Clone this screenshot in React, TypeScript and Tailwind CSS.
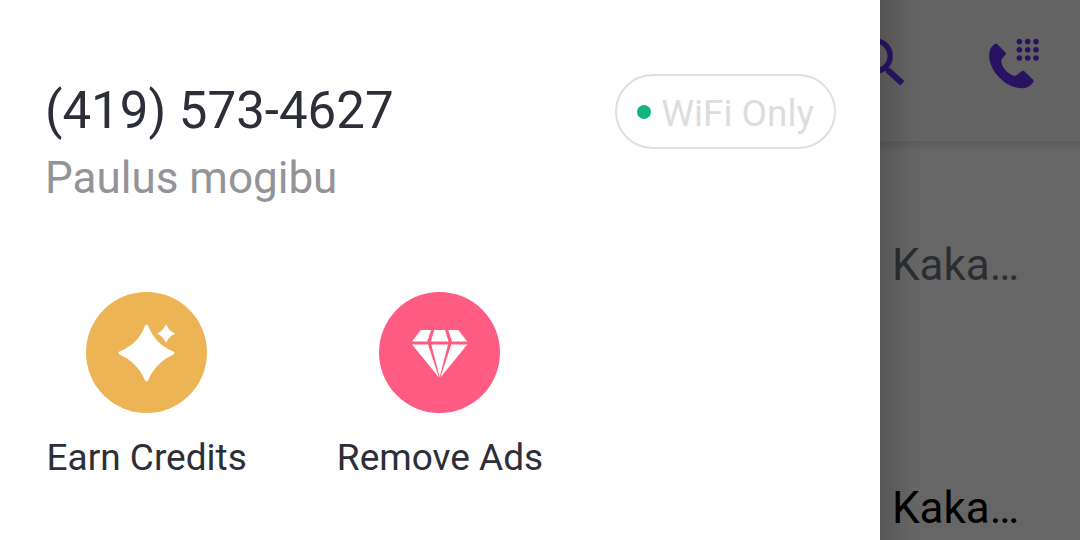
import type { ReactNode } from "react";

interface QuickActionProps {
  label: string;
  circleClass: string;
  children: ReactNode;
}

const chats = [
  { id: 1, name: "Kaka…", color: "text-[#2c2d31]" },
  { id: 2, name: "Kaka…", color: "text-black" },
];

function SearchIcon() {
  return (
    <svg className="h-[50px] w-[50px]" viewBox="0 0 50 50" fill="none" stroke="#2a1463" aria-hidden="true">
      <circle cx="19" cy="20" r="15.2" strokeWidth="5.4" />
      <path d="M29.5 32 L33 35.2" strokeWidth="4.6" />
      <path d="M32 34.2 L46.3 47.3" strokeWidth="6" />
    </svg>
  );
}

function DialpadIcon() {
  const steps = [0, 1, 2];

  return (
    <svg className="h-[54px] w-[54px]" viewBox="0 0 54 54" fill="#2a1263" aria-hidden="true">
      <path d="M6.6 7.9 Q8.2 6.9 9.6 8.4 L17.2 16.2 Q18.6 17.7 17.2 19.2 L14.2 22.4 Q12.8 24 13.4 26.2 C14.8 32.4 19.6 37.6 25.6 39.6 Q27.6 40.2 29.2 38.8 L33.6 35.2 Q35.2 34 36.6 35.4 L44.9 43.6 Q46.4 45.2 45 46.7 C40.4 52 34.4 53.8 26 51 C14.4 47 4.6 36.6 1.8 25 C0.2 17.4 1.4 11.4 6.6 7.9 Z" />
      {steps.map((row) =>
        steps.map((col) => (
          <circle key={`${row}-${col}`} cx={31.4 + col * 8.3} cy={5.6 + row * 8.2} r="2.8" />
        ))
      )}
    </svg>
  );
}

function SparkleIcon() {
  return (
    <svg className="h-full w-full" viewBox="0 0 121 121" fill="white" aria-hidden="true">
      <path d="M59.2 33.6 Q60.6 31.4 62 33.6 C67 46.5 75 54.5 87.4 59.6 Q89.6 61 87.4 62.4 C76.5 67 67.5 76 62 88.4 Q60.6 90.6 59.2 88.4 C53.7 76 44.5 67 33.6 62.4 Q31.4 61 33.6 59.6 C46 54.5 54.2 46.5 59.2 33.6 Z" />
      <path d="M79.3 33.2 Q80 32.2 80.7 33.2 C82.3 37 84.6 39.4 88.2 40.9 Q89.2 41.6 88.2 42.3 C84.6 43.8 82.3 46.2 80.7 49.8 Q80 50.8 79.3 49.8 C77.7 46.2 75.4 43.8 71.8 42.3 Q70.8 41.6 71.8 40.9 C75.4 39.4 77.7 37 79.3 33.2 Z" />
    </svg>
  );
}

function DiamondIcon() {
  return (
    <svg className="h-full w-full" viewBox="0 0 121 121" fill="white" aria-hidden="true">
      <path d="M41.8 38 H52 L48.3 49.4 H33 Z" />
      <path d="M55.3 38 H66 L69.6 49.4 H51.7 Z" />
      <path d="M69.3 38 H79.3 L88.3 49.4 H73 Z" />
      <path d="M33 52.6 H49 L60 85.4 Z" />
      <path d="M52.3 52.6 H69 L60.7 85 Z" />
      <path d="M72.3 52.6 H88.3 L61.4 85.4 Z" />
    </svg>
  );
}

function QuickAction({ label, circleClass, children }: QuickActionProps) {
  return (
    <button type="button" className="flex flex-col items-center gap-5">
      <span className={`block h-[121px] w-[121px] rounded-full ${circleClass}`}>{children}</span>
      <span className="whitespace-nowrap text-[37px] leading-[50px] text-[#2c2e38]">{label}</span>
    </button>
  );
}

function Drawer() {
  return (
    <aside className="min-w-0 flex-1 bg-white">
      <header className="flex items-start justify-between pl-[45px] pr-[44px] pt-[74px]">
        <div>
          <h1 className="text-[51px] leading-[74px] text-[#2c2e38]">(419) 573-4627</h1>
          <p className="text-[44px] leading-[60px] text-[#939498]">Paulus mogibu</p>
        </div>
        <button
          type="button"
          className="flex h-[75px] items-center gap-2.5 whitespace-nowrap rounded-full border-2 border-[#dfe0e1] px-5 text-[37px] leading-[50px] text-[#dcddde]"
        >
          <span className="h-[14px] w-[14px] rounded-full bg-[#12b67c]" />
          <span className="pt-1">WiFi Only</span>
        </button>
      </header>

      <div className="mt-[84px] grid grid-cols-3">
        <QuickAction label="Earn Credits" circleClass="bg-[#edb455]">
          <SparkleIcon />
        </QuickAction>
        <QuickAction label="Remove Ads" circleClass="bg-[#fe5c83]">
          <DiamondIcon />
        </QuickAction>
      </div>
    </aside>
  );
}

function Conversations() {
  return (
    <main className="relative w-[200px] shrink-0 overflow-hidden bg-[#666666]">
      <header className="flex h-[141px] items-start justify-between bg-[#636363] pr-[38px] pt-9">
        <button type="button" aria-label="Search" className="-ml-6">
          <SearchIcon />
        </button>
        <button type="button" aria-label="Dialpad">
          <DialpadIcon />
        </button>
      </header>
      <div className="h-3 bg-linear-to-b from-[#5b5b5b] to-[#666666]" />
      <ul>
        {chats.map((chat) => (
          <li key={chat.id} className={`h-[243px] pl-3 pt-[86px] text-[44px] leading-[52px] ${chat.color}`}>
            {chat.name}
          </li>
        ))}
      </ul>
      {/* shadow cast by the open drawer */}
      <div className="pointer-events-none absolute inset-y-0 left-0 w-9 bg-linear-to-r from-black/15 to-transparent" />
    </main>
  );
}

export default function App() {
  return (
    <div className="flex h-screen overflow-hidden font-['Roboto',sans-serif]">
      <Drawer />
      <Conversations />
    </div>
  );
}
